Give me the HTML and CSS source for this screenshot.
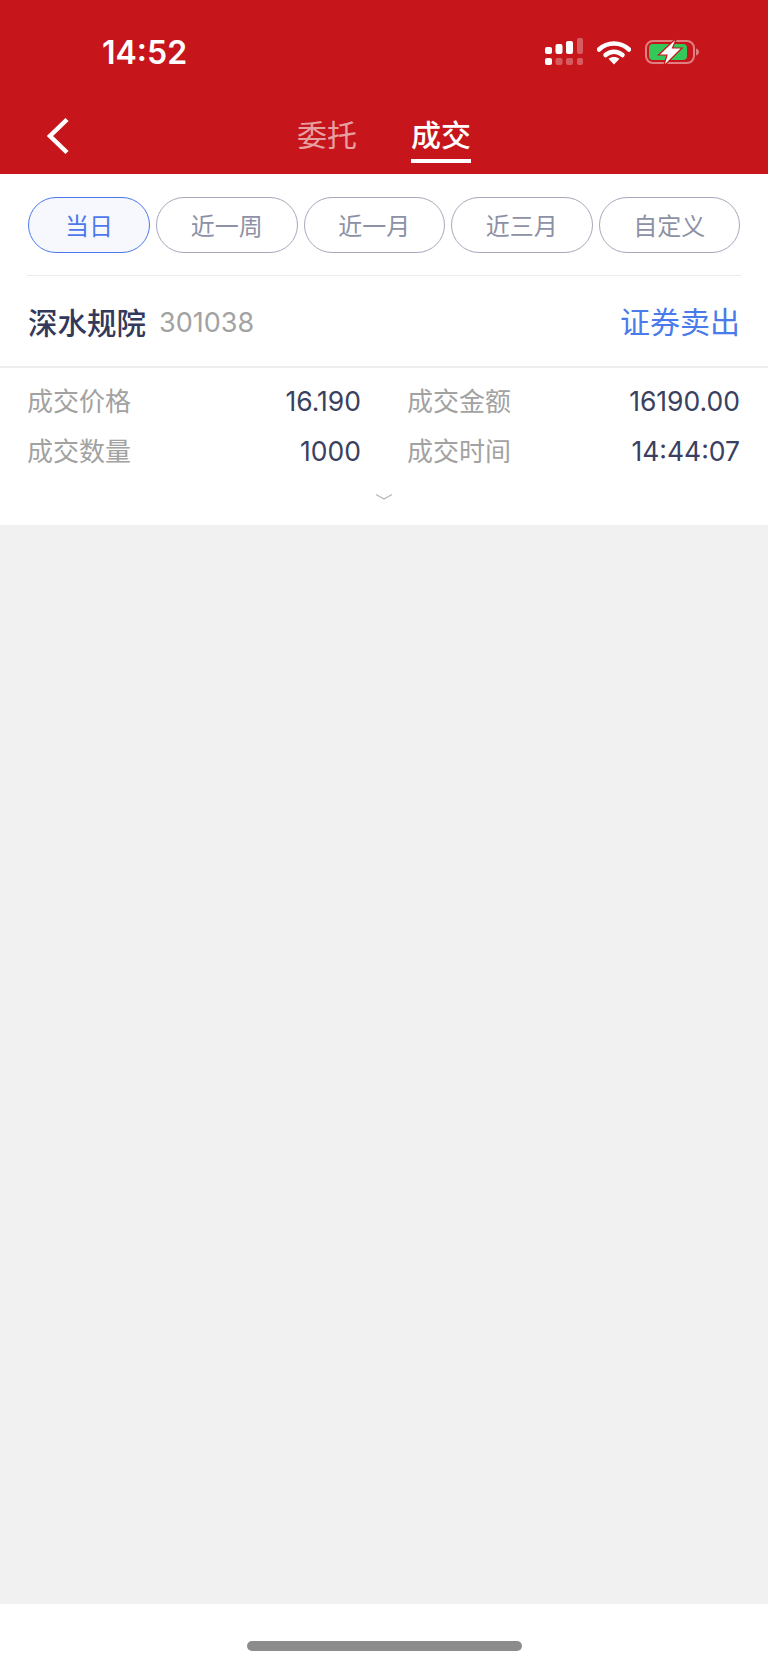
FILE: index.html
```html
<!DOCTYPE html>
<html lang="zh-CN">
<head>
<meta charset="UTF-8">
<meta name="viewport" content="width=device-width, initial-scale=1.0">
<title>成交</title>
<link rel="stylesheet" href="styles.css">
</head>
<body>
    <div class="page">
        <header class="top">
            <div class="status">
                <span class="clock">14:52</span>
                <div class="status-icons">
                    <svg class="signal" width="40" height="28" viewBox="0 0 40 28">
                        <g fill="#fff">
                            <rect x="1" y="9" width="7" height="7" rx="2"/>
                            <rect x="11.500" y="6" width="7" height="10" rx="2"/>
                            <rect x="22" y="3" width="7" height="13" rx="2"/>
                            <rect x="1" y="20" width="7" height="7" rx="2"/>
                        </g>
                        <g fill="#fff" fill-opacity="0.3">
                            <rect x="33" y="0" width="6" height="16" rx="2"/>
                            <rect x="11.500" y="20" width="7" height="7" rx="2"/>
                            <rect x="22" y="20" width="7" height="7" rx="2"/>
                            <rect x="33" y="20" width="6" height="7" rx="2"/>
                        </g>
                    </svg>
                    <svg class="wifi" width="34" height="25" viewBox="0 0 34 25">
                        <path d="M2 9.500C10.500 1.500 23.500 1.500 32 9.500" fill="none" stroke="#fff" stroke-width="4.500" stroke-linecap="round"/>
                        <path d="M8.500 15C13.500 10.500 20.500 10.500 25.500 15" fill="none" stroke="#fff" stroke-width="4.500" stroke-linecap="round"/>
                        <path d="M17 24.500L11.500 18.700C14.800 16.300 19.200 16.300 22.500 18.700Z" fill="#fff"/>
                    </svg>
                    <svg class="battery" width="56" height="30" viewBox="0 0 56 30">
                        <rect x="2" y="4" width="48" height="22" rx="7" fill="none" stroke="#fff" stroke-opacity="0.45" stroke-width="2"/>
                        <rect x="5" y="7" width="38" height="16" rx="4" fill="#34c759"/>
                        <path d="M52 11.500C54 12 55 13.500 55 15C55 16.500 54 18 52 18.500Z" fill="#fff" fill-opacity="0.45"/>
                        <path d="M33 0.500L14.500 18H23L19.500 29.500L38 11H28.500Z" fill="#fff" stroke="#c6161b" stroke-width="1.200"/>
                    </svg>
                </div>
            </div>
            <nav class="nav">
                <svg class="back" width="24" height="38" viewBox="0 0 24 38">
                    <path d="M21 2.500L4 19L21 35.500" fill="none" stroke="#fff" stroke-width="4.500"/>
                </svg>
                <a class="tab">委托</a>
                <a class="tab tab-on">成交</a>
            </nav>
        </header>

        <section class="panel">
            <div class="filters">
                <span class="pill pill-on">当日</span>
                <span class="pill">近一周</span>
                <span class="pill">近一月</span>
                <span class="pill">近三月</span>
                <span class="pill">自定义</span>
            </div>
            <div class="title-row">
                <div class="stock">
                    <span class="stock-name">深水规院</span>
                    <span class="stock-code">301038</span>
                </div>
                <span class="trade-type">证券卖出</span>
            </div>
            <div class="details">
                <div class="cell"><span class="label">成交价格</span><span class="value">16.190</span></div>
                <div class="cell"><span class="label">成交金额</span><span class="value">16190.00</span></div>
                <div class="cell"><span class="label">成交数量</span><span class="value">1000</span></div>
                <div class="cell"><span class="label">成交时间</span><span class="value">14:44:07</span></div>
            </div>
            <div class="more">
                <svg width="18" height="8" viewBox="0 0 18 8">
                    <path d="M1 1.500L9 6L17 1.500" fill="none" stroke="#b4b6bd" stroke-width="1.300"/>
                </svg>
            </div>
        </section>

        <main class="empty"></main>

        <footer class="home">
            <div class="home-bar"></div>
        </footer>
    </div>
</body>
</html>
```

FILE: styles.css
```css
body {
    font-family: Inter, 'Noto Sans CJK SC', sans-serif;
    margin: 0;
    padding: 0;
    background-color: #f1f1f1;
}

.page {
    display: flex;
    flex-direction: column;
    height: 1665px;
}

.top {
    height: 174px;
    background-color: #c6161b;
    color: #fff;
}

.status {
    display: flex;
    justify-content: space-between;
    align-items: center;
    height: 52px;
    padding: 26px 68px 0 102px;
}

.clock {
    font-size: 32px;
    font-weight: 600;
}

.status-icons {
    display: flex;
    align-items: center;
    gap: 13px;
}

.nav {
    position: relative;
    display: flex;
    justify-content: center;
    gap: 54px;
    padding: 32px 0 0 0;
    font-family: 'Noto Sans CJK SC', sans-serif;
}

.back {
    position: absolute;
    left: 46px;
    top: 39px;
}

.tab {
    width: 60px;
    height: 53px;
    font-size: 30px;
    line-height: 46px;
    text-align: center;
    color: rgba(255, 255, 255, 0.6);
}

.tab-on {
    color: #fff;
    font-weight: 500;
    border-bottom: 4px solid #fff;
    box-sizing: border-box;
}

.panel {
    background-color: #fff;
}

.filters {
    display: flex;
    gap: 6px;
    margin: 0 27px;
    padding: 23px 0 22px 1px;
    border-bottom: 1px solid #ececec;
}

.pill {
    flex: 1 1 141px;
    height: 54px;
    border: 1px solid #a5a9bb;
    border-radius: 28px;
    font-family: 'Noto Sans CJK SC', sans-serif;
    font-size: 24px;
    line-height: 54px;
    text-align: center;
    color: #8d91a5;
}

.pill-on {
    flex: 0 0 120px;
    border-color: #4d78ec;
    background-color: #f6f8fe;
    color: #4d78ec;
}

.filters .pill:last-child {
    margin-right: 1px;
}

.title-row {
    display: flex;
    justify-content: space-between;
    align-items: center;
    height: 90px;
    padding: 0 28px;
    border-bottom: 2px solid #eeeeee;
}

.stock {
    display: flex;
    align-items: center;
    gap: 13px;
}

.stock-name {
    padding-bottom: 1px;
    font-family: 'Noto Sans CJK SC', sans-serif;
    font-size: 29.500px;
    font-weight: 500;
    color: #33395a;
}

.stock-code {
    padding-top: 2px;
    font-size: 27px;
    color: #a2a2a2;
}

.trade-type {
    padding-bottom: 3px;
    font-family: 'Noto Sans CJK SC', sans-serif;
    font-size: 30px;
    color: #4a7bea;
}

.details {
    display: grid;
    grid-template-columns: 334px 333px;
    column-gap: 46px;
    padding: 6px 28px 0 27px;
}

.cell {
    display: flex;
    justify-content: space-between;
    align-items: center;
    height: 50px;
}

.label {
    font-family: 'Noto Sans CJK SC', sans-serif;
    font-size: 26px;
    color: #a2a2a2;
}

.value {
    padding-top: 3px;
    font-size: 26.500px;
    color: #3a4060;
}

.more {
    display: flex;
    justify-content: center;
    height: 51px;
    box-sizing: border-box;
}

.more svg {
    margin-top: 19px;
}

.empty {
    flex: 1;
}

.home {
    display: flex;
    justify-content: center;
    height: 61px;
    background-color: #fff;
}

.home-bar {
    width: 275px;
    height: 10px;
    margin-top: 37px;
    border-radius: 5px;
    background-color: #8c8c8c;
}
```
